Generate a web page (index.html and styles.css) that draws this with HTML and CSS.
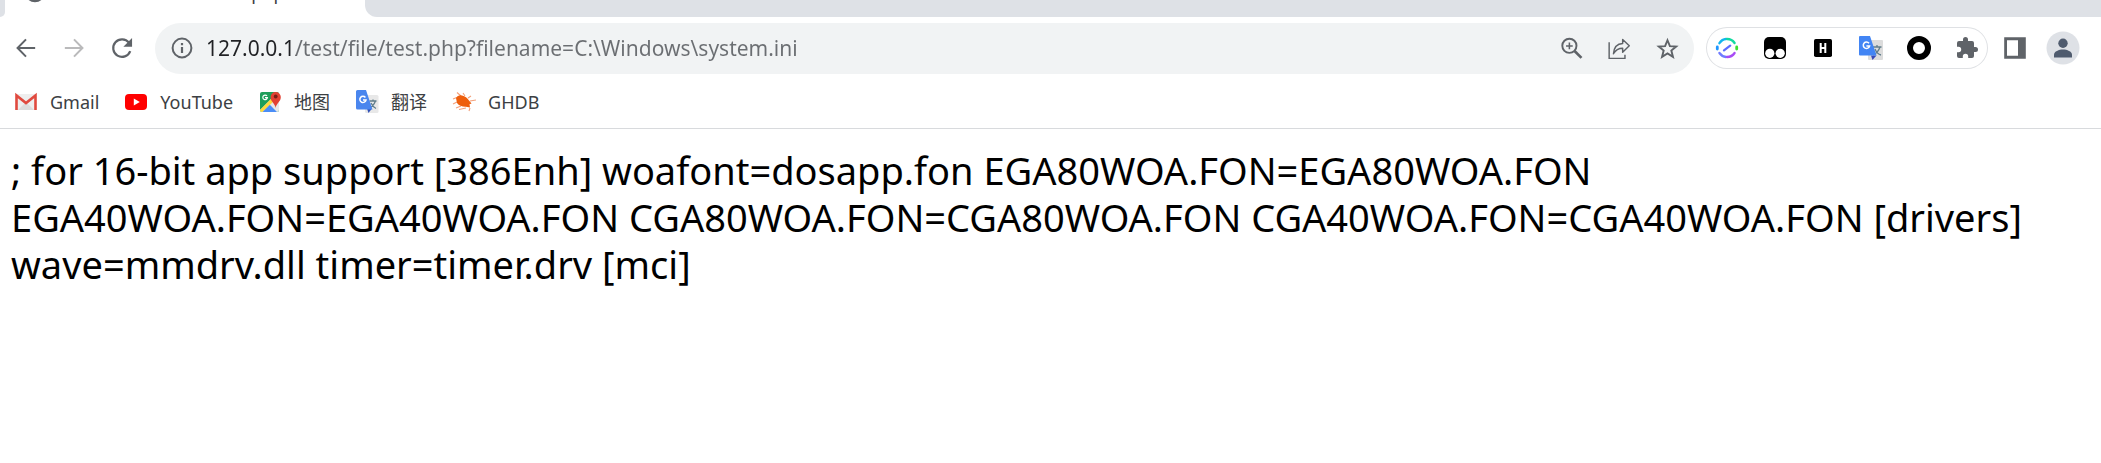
FILE: index.html
```
<!DOCTYPE html>
<html lang="zh-CN">
<head>
<meta charset="utf-8">
<title>127.0.0.1/test/file/test.php</title>
<link rel="stylesheet" href="styles.css">
</head>
<body>
<div class="tabstrip">
  <div class="tab-prev"></div>
  <div class="tab">
    <svg class="tab-icon" viewBox="0 0 24 24"><circle cx="12" cy="12" r="9" fill="none" stroke="#5f6368" stroke-width="2.5"/></svg>
    <span class="tab-title">127.0.0.1/test/file/test.php</span>
  </div>
  <div class="tab-rest"></div>
</div>
<header class="toolbar">
  <nav class="nav">
    <button class="icon-btn" aria-label="Back"><svg viewBox="0 0 24 24" fill="none" stroke="#5f6368" stroke-width="2.2"><path d="M22 12H3M12 2.6 2.8 12l9.2 9.4"/></svg></button>
    <button class="icon-btn" aria-label="Forward"><svg viewBox="0 0 24 24" fill="none" stroke="#bababb" stroke-width="2.2"><path d="M2 12h19M12 2.6l9.2 9.4-9.2 9.4"/></svg></button>
    <button class="icon-btn" aria-label="Reload"><svg viewBox="0 0 24 24" fill="none"><path d="M19.6 6.2A9.6 9.6 0 1 0 21 15.5" stroke="#5f6368" stroke-width="2.4"/><path d="M23 1v9.5h-9.5z" fill="#5f6368"/></svg></button>
  </nav>
  <form class="omnibox">
    <button type="button" class="info-btn" aria-label="Site information"><svg viewBox="0 0 24 24"><circle cx="12" cy="12" r="9.4" fill="none" stroke="#5f6368" stroke-width="2"/><path d="M10.9 11h2.2v6h-2.2zM10.9 7h2.2v2.2h-2.2z" fill="#5f6368"/></svg></button>
    <input class="url" type="text" aria-label="Address" spellcheck="false" value="127.0.0.1/test/file/test.php?filename=C:\Windows\system.ini">
    <button type="button" class="icon-btn" aria-label="Zoom"><svg viewBox="0 0 24 24" fill="none" stroke="#5f6368" stroke-width="2"><circle cx="9.8" cy="9.2" r="7.4"/><path d="M9.8 5.8v7M6.3 9.3h7" stroke-width="1.6"/><path d="m15.2 14.6 7.2 7.2" stroke-width="2.8"/></svg></button>
    <button type="button" class="icon-btn" aria-label="Share"><svg viewBox="0 0 24 24" fill="none" stroke="#5f6368" stroke-width="1.5"><path d="M1.2 5.5v16.8h16.5v-3.8"/><path d="M5.7 17.5c.5-6.7 3.8-10.4 9.6-10.7V2.5l6.9 6.7-6.9 6.7v-4.2c-4.5 0-7.3 1.7-9.6 5.8z" stroke-linejoin="round"/></svg></button>
    <button type="button" class="icon-btn" aria-label="Bookmark"><svg viewBox="0 0 24 24" fill="none" stroke="#5f6368" stroke-width="2"><path d="m12 3.4 2.5 6.1 6.6.5-5.1 4.2 1.7 6.5-5.7-3.5-5.7 3.5 1.7-6.5-5.1-4.2 6.6-.5z"/></svg></button>
  </form>
  <div class="extensions">
    <button class="icon-btn" aria-label="Colour ring"><svg viewBox="0 0 24 24" fill="none" stroke-width="2.3" stroke-linecap="round"><path d="M4.4 7.2Q7 3.2 11 3" stroke="#12b5ee"/><path d="M12 3q5 0 7.6 4" stroke="#12d9a0"/><path d="M4.4 17Q7 20.6 11 21" stroke="#6f7bff"/><path d="M12 21q5 0 7.6-4" stroke="#a84cf5"/><path d="m9 14.3 6.2-4.6" stroke="#5d6cff"/><path d="M2.3 11v2" stroke="#1e96ff" stroke-width="2.8"/><path d="M21.7 11v2" stroke="#3be02e" stroke-width="2.8"/></svg></button>
    <button class="icon-btn" aria-label="Scripts"><svg viewBox="0 0 24 24"><rect x="1" y="1" width="22" height="22" rx="5" fill="#000"/><circle cx="6.8" cy="17.3" r="4.6" fill="#fff"/><circle cx="17.2" cy="17.3" r="4.6" fill="#fff"/></svg></button>
    <button class="icon-btn" aria-label="HackBar"><svg viewBox="0 0 24 24"><rect x="3" y="3" width="18" height="18" rx="1.8" fill="#000"/><path d="M9.7 7v10M14.3 7v10M9.7 12h4.6" stroke="#fff" stroke-width="2"/></svg></button>
    <button class="icon-btn" aria-label="Translate"><svg viewBox="0 0 24 24"><rect x="9" y="4" width="15" height="20" rx="1" fill="#dcdcdc"/><path d="M14 11h8.5M18 9v2M21 11q-2 6-7 8M16 13q2 5 6 6" stroke="#607d8b" stroke-width="1.3" fill="none"/><path d="m12 19.5 5.5 0-4 4.5z" fill="#3548b8"/><path d="M1 0h10l6.5 19.5H1a1 1 0 0 1-1-1V1a1 1 0 0 1 1-1z" fill="#4285f4"/><path d="M10 7.3A3.2 3.2 0 1 0 10.6 10H7.4" stroke="#fff" stroke-width="1.5" fill="none"/></svg></button>
    <button class="icon-btn" aria-label="Ring"><svg viewBox="0 0 24 24"><circle cx="12" cy="12" r="9" fill="none" stroke="#000" stroke-width="6"/></svg></button>
    <button class="icon-btn" aria-label="Extensions"><svg viewBox="0 0 24 24"><path d="M20.5 11H19V7a2 2 0 0 0-2-2h-4V3.5a2.5 2.5 0 0 0-5 0V5H4a2 2 0 0 0-2 2v3.8h1.5a2.7 2.7 0 0 1 0 5.4H2V20a2 2 0 0 0 2 2h3.8v-1.5a2.7 2.7 0 0 1 5.4 0V22H17a2 2 0 0 0 2-2v-4h1.5a2.5 2.5 0 0 0 0-5z" fill="#5f6368"/></svg></button>
  </div>
  <div class="tools">
    <button class="icon-btn" aria-label="Side panel"><svg viewBox="0 0 24 24"><path d="M1.2 1.2h21.6v21.6H1.2zM4 4.3v15.4h11V4.3z" fill="#5f6368" fill-rule="evenodd"/></svg></button>
    <button class="icon-btn avatar" aria-label="Profile"><svg viewBox="0 0 34 34"><circle cx="17" cy="17" r="16.5" fill="#dee1e6"/><circle cx="17" cy="12.2" r="4.7" fill="#4f5b6e"/><path d="M8 26.5v-3c0-3 5-5 9-5s9 2 9 5v3z" fill="#4f5b6e"/></svg></button>
  </div>
</header>
<nav class="bookmarks">
  <a href="#"><svg viewBox="0 0 24 24"><path d="M2 4h20v16H2z" fill="#eee"/><path d="m4 20 8-8 8 8z" fill="#dcdcdc"/><path d="M2.5 20V5.5L12 13l9.5-7.5V20" fill="none" stroke="#e04a3f" stroke-width="2.6"/></svg>Gmail</a>
  <a href="#"><svg viewBox="0 0 24 24"><rect x="1" y="4" width="22" height="16" rx="4" fill="#f00"/><path d="m9.8 8.6 6 3.4-6 3.4z" fill="#fff"/></svg>YouTube</a>
  <a href="#"><svg viewBox="0 0 24 24"><rect x="2" y="2" width="19" height="20" rx="2" fill="#1e9e5a"/><path d="M2 20 17 5l4 4v11a2 2 0 0 1-2 2H4z" fill="#e8e8e8"/><path d="m2 20 12-12 2.5 2.5L4.5 22H4q-2 0-2-2z" fill="#ffd83b"/><path d="m4.5 22 7.3-7.2L19 22z" fill="#4a8df6"/><path d="M9 6A2.3 2.3 0 1 0 9.4 7.7H7" stroke="#fff" stroke-width="1.2" fill="none"/><path d="M17.6 18c-.6-5-5-6-5-11a5 5 0 0 1 10.2 0c0 5-4.6 6-5.2 11z" fill="#e34133"/><circle cx="17.7" cy="6.5" r="1.9" fill="#7a1d16"/></svg>地图</a>
  <a href="#"><svg viewBox="0 0 24 24"><rect x="10" y="5" width="13.5" height="18" rx="1.5" fill="#e8e8e8"/><path d="M14.5 11h7M18 9.5V11M20.5 11q-2 5-6 7M16 13q2 4 5 5.5" stroke="#607d8b" stroke-width="1.3" fill="none"/><path d="M12 18.5h5L13.5 23z" fill="#3050b8"/><path d="M2.5 0H11l6.5 19.5h-15A1.5 1.5 0 0 1 1 18V1.5A1.5 1.5 0 0 1 2.5 0z" fill="#4a86ee"/><path d="M10.4 7.5A3.1 3.1 0 1 0 11 10H8" stroke="#fff" stroke-width="1.5" fill="none"/></svg>翻译</a>
  <a href="#"><svg viewBox="0 0 24 24"><g stroke="#f4a07a" stroke-width="1.1" fill="none"><path d="M6 7 1 9M9 6 5 2.5M13 6l-2-3M5 12l-4 2M9 16l-5 2M14 18l-7 1.5M18 11l6-1M18 18l-1 3M16 8l3-2"/></g><path d="M4 8q2-3.5 6-2.5 4.5 1 7 5l2.5 3-2 .8.5 3.2-4-.7Q8 17 5 13z" fill="#ee5f0d"/></svg>GHDB</a>
</nav>
<main class="page">; for 16-bit app support [386Enh] woafont=dosapp.fon EGA80WOA.FON=EGA80WOA.FON EGA40WOA.FON=EGA40WOA.FON CGA80WOA.FON=CGA80WOA.FON CGA40WOA.FON=CGA40WOA.FON [drivers] wave=mmdrv.dll timer=timer.drv [mci]</main>
</body>
</html>
```
FILE: styles.css
```
* { box-sizing: border-box; }
body {
  margin: 0;
  background: #fff;
  color: #000;
  font-family: "Noto Sans", "Noto Sans CJK SC", sans-serif;
}
svg { display: block; flex: none; width: 24px; height: 24px; }
button { border: 0; padding: 0; background: none; display: flex; align-items: center; justify-content: center; }

.tabstrip { display: flex; height: 17px; overflow: hidden; background: #fff; }
.tab-prev { width: 5px; background: #dee1e6; border-bottom-right-radius: 12px; }
.tab { width: 360px; display: flex; align-items: flex-end; gap: 14px; height: 4px; padding-left: 18px; }
.tab-title { font-size: 18px; line-height: 22px; color: #3c4043; white-space: nowrap; }
.tab-rest { flex: 1; background: #dee1e6; border-bottom-left-radius: 12px; }

.toolbar { display: flex; align-items: center; height: 62px; padding: 0 17px 0 5px; }
.nav, .tools, .extensions { display: flex; align-items: center; gap: 6px; }
.nav { margin-right: 12px; }
.icon-btn { width: 42px; height: 42px; flex: none; }
.nav svg { width: 22px; height: 22px; }
.omnibox {
  flex: 1;
  display: flex;
  align-items: center;
  gap: 6px;
  height: 51px;
  padding: 0 6px 0 14px;
  border-radius: 26px;
  background: #f1f3f4;
}
.omnibox .icon-btn svg { width: 23px; height: 23px; }
.info-btn { width: 26px; height: 42px; }
.url {
  flex: 1;
  min-width: 0;
  height: 42px;
  margin-left: 5px;
  padding: 0;
  border: 0;
  outline: 0;
  font: 21px "Noto Sans", sans-serif;
  color: transparent;
  background: linear-gradient(90deg, #202124 90px, #6b6e72 90px);
  -webkit-background-clip: text;
  background-clip: text;
}
.extensions {
  height: 42px;
  margin: 0 6px 0 12px;
  border-radius: 21px;
  box-shadow: inset 0 0 0 1px #dfe1e4;
}
.avatar svg { width: 34px; height: 34px; }

.bookmarks {
  display: flex;
  align-items: center;
  gap: 25px;
  height: 50px;
  padding: 0 14px 4px;
  border-bottom: 1px solid #d8dadd;
}
.bookmarks a {
  display: flex;
  align-items: center;
  gap: 12px;
  color: #3c4043;
  font-size: 18px;
  line-height: 24px;
  text-decoration: none;
}
.page { padding: 18px 11px; font-size: 38px; line-height: 47px; }
```
